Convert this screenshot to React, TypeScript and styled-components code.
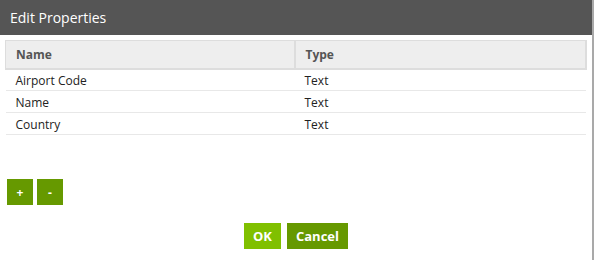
import React from "react";
import styled, { createGlobalStyle } from "styled-components";

const Global = createGlobalStyle`
  html, body { margin: 0; padding: 0; background: #fff; }
  body { font-family: "Open Sans", "Noto Sans", sans-serif; }
  * { box-sizing: border-box; }
`;

const Dialog = styled.div`
  width: 594px;
  height: 260px;
  border-right: 2px solid #a9a9a9;
  background: #fff;
  display: flex;
  flex-direction: column;
`;

const TitleBar = styled.div`
  height: 35px;
  background: #555555;
  color: #fff;
  font-size: 14px;
  display: flex;
  align-items: center;
  padding-left: 10px;
  padding-bottom: 1px;
`;

const Body = styled.div`
  padding: 5px 5px 0 5px;
  display: flex;
  flex-direction: column;
`;

const Table = styled.table`
  width: 582px;
  border-collapse: collapse;
  font-size: 12px;
  color: #222;
`;

const HeadCell = styled.th<{ $width?: number }>`
  height: 28px;
  width: ${(p) => (p.$width ? `${p.$width}px` : "auto")};
  background: #eeeeee;
  border: 1px solid #dddddd;
  border-width: 1px 2px 2px 0;
  text-align: left;
  font-weight: 700;
  color: #555;
  padding: 0 0 0 10px;
  &:first-child { border-left: 1px solid #dddddd; }
`;

const Cell = styled.td`
  height: 22px;
  padding: 1px 0 0 10px;
  border-bottom: 1px solid #e8e8e8;
`;

const SmallButtons = styled.div`
  display: flex;
  gap: 4px;
  margin: 44px 0 0 2px;
`;

const SquareButton = styled.button`
  width: 26px;
  height: 26px;
  border: none;
  background: #669900;
  color: #fff;
  font-family: "Open Sans", sans-serif;
  font-weight: 700;
  font-size: 12px;
  padding: 0;
`;

const Footer = styled.div`
  display: flex;
  justify-content: center;
  gap: 6px;
  margin-top: 18px;
`;

const ActionButton = styled.button<{ $primary?: boolean; $width: number }>`
  width: ${(p) => p.$width}px;
  height: 26px;
  border: none;
  padding: 0;
  background: ${(p) => (p.$primary ? "#80c000" : "#669900")};
  color: #fff;
  font-family: "Open Sans", sans-serif;
  font-weight: 700;
  font-size: 13px;
`;

const rows = [
  ["Airport Code", "Text"],
  ["Name", "Text"],
  ["Country", "Text"],
];

export default function App() {
  return (
    <>
      <Global />
      <Dialog>
        <TitleBar>Edit Properties</TitleBar>
        <Body>
          <Table>
            <thead>
              <tr>
                <HeadCell $width={289}>Name</HeadCell>
                <HeadCell>Type</HeadCell>
              </tr>
            </thead>
            <tbody>
              {rows.map(([n, t]) => (
                <tr key={n}>
                  <Cell>{n}</Cell>
                  <Cell>{t}</Cell>
                </tr>
              ))}
            </tbody>
          </Table>
          <SmallButtons>
            <SquareButton>+</SquareButton>
            <SquareButton>-</SquareButton>
          </SmallButtons>
          <Footer>
            <ActionButton $primary $width={37}>OK</ActionButton>
            <ActionButton $width={61}>Cancel</ActionButton>
          </Footer>
        </Body>
      </Dialog>
    </>
  );
}
